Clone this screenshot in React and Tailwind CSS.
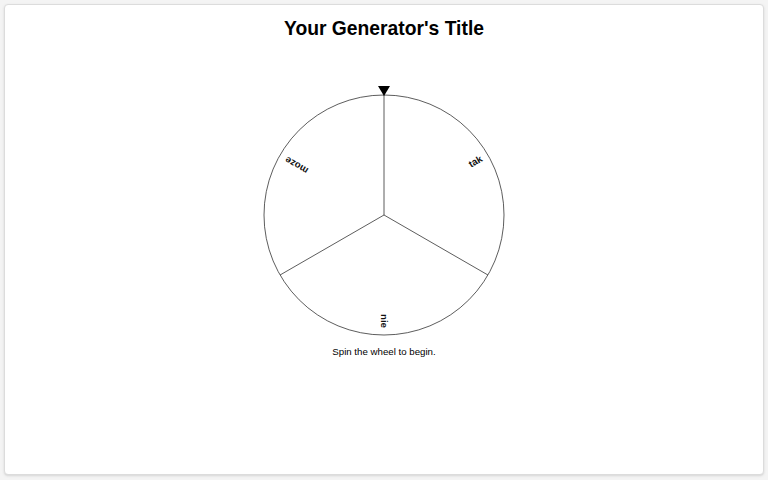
import React from "react";

const segments = ["tak", "nie", "moze"];

function Wheel() {
	const cx = 125;
	const cy = 130;
	const r = 120;
	const step = 360 / segments.length;
	return (
		<svg width="250" height="252" viewBox="0 0 250 252">
			<circle cx={cx} cy={cy} r={r} fill="#fff" stroke="#333" strokeWidth="0.8" />
			{segments.map((label, i) => {
				const start = -90 + i * step;
				const a = (start * Math.PI) / 180;
				const mid = start + step / 2;
				const m = (mid * Math.PI) / 180;
				const tr = 113;
				return (
					<g key={label}>
						<line x1={cx} y1={cy} x2={cx + r * Math.cos(a)} y2={cy + r * Math.sin(a)} stroke="#333" strokeWidth="0.8" />
						<text
							x={cx + tr * Math.cos(m)}
							y={cy + tr * Math.sin(m)}
							textAnchor="end"
							dominantBaseline="middle"
							fontSize="9.7"
							fontWeight="bold"
							fontFamily="'Liberation Sans', Arial, sans-serif"
							fill="#111"
							transform={`rotate(${mid} ${cx + tr * Math.cos(m)} ${cy + tr * Math.sin(m)})`}
						>
							{label}
						</text>
					</g>
				);
			})}
			<polygon points="119,1 131,1 125,11" fill="#000" />
		</svg>
	);
}

export default function App() {
	return (
		<div className="w-[768px] h-[480px] bg-[#f4f4f4] p-1 font-['Liberation_Sans',Arial,sans-serif]">
			<div className="h-[471px] bg-white border border-[#dcdcdc] rounded-sm shadow-sm flex flex-col items-center pt-[10px]">
				<h1 className="text-[19.3px] leading-7 font-bold text-black">Your Generator's Title</h1>
				<div className="mt-[42px]">
					<Wheel />
				</div>
				<p className="mt-2 text-[9.7px] leading-[14px] text-black">Spin the wheel to begin.</p>
			</div>
		</div>
	);
}
